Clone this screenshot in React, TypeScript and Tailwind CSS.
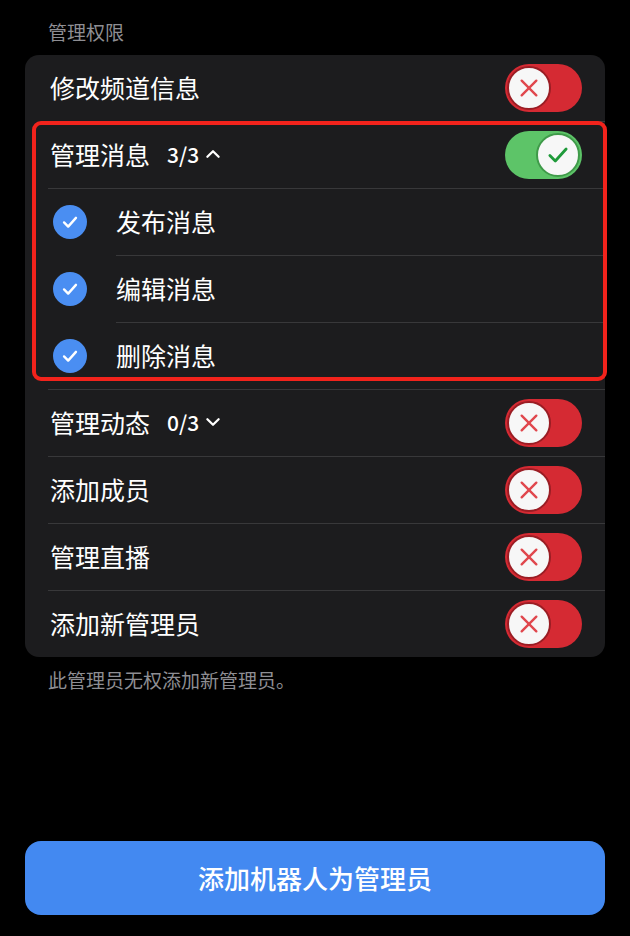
import React from "react";

const font = { fontFamily: '"Noto Sans CJK SC", "Noto Sans", sans-serif' };

const Toggle = ({ on }: { on: boolean }) => (
  <div
    className={`flex h-[48px] w-[77px] items-center rounded-full p-[2px] ${
      on ? "justify-end bg-[#5dc468]" : "justify-start bg-[#d52a33]"
    }`}
  >
    <div
      className={`flex h-[44px] w-[44px] items-center justify-center rounded-full border-2 bg-[#f7f7f7] ${
        on ? "border-[#3f9a49]" : "border-[#9a1d24]"
      }`}
    >
      {on ? (
        <svg width="26" height="26" viewBox="0 0 24 24" fill="none" stroke="#1f9a3a" strokeWidth="2.6" strokeLinecap="round" strokeLinejoin="round">
          <polyline points="4.5,12.5 9.5,17.5 19.5,6.5" />
        </svg>
      ) : (
        <svg width="22" height="22" viewBox="0 0 24 24" fill="none" stroke="#e0474d" strokeWidth="2.6" strokeLinecap="round">
          <line x1="4" y1="4" x2="20" y2="20" />
          <line x1="20" y1="4" x2="4" y2="20" />
        </svg>
      )}
    </div>
  </div>
);

const Chevron = ({ up }: { up: boolean }) => (
  <svg width="18" height="18" viewBox="0 0 16 16" fill="none" stroke="#fff" strokeWidth="2" strokeLinecap="round" strokeLinejoin="round" className="ml-[5px]">
    {up ? <polyline points="3,10.5 8,5.5 13,10.5" /> : <polyline points="3,5.5 8,10.5 13,5.5" />}
  </svg>
);

const Divider = ({ inset }: { inset: string }) => <div className={`h-px bg-[#38383a] ${inset}`} />;

const Row = ({ label, count, up, on }: { label: string; count?: string; up?: boolean; on: boolean }) => (
  <div className="flex h-[66px] items-center justify-between pl-[25px] pr-[23px]">
    <div className="flex items-center pb-[2px]">
      <span className="text-[25px] leading-[32px] text-white">{label}</span>
      {count && (
        <>
          <span className="ml-[17px] text-[21px] font-medium leading-[32px] text-white">{count}</span>
          <Chevron up={!!up} />
        </>
      )}
    </div>
    <Toggle on={on} />
  </div>
);

const SubRow = ({ label }: { label: string }) => (
  <div className="flex h-[66px] items-center">
    <div className="ml-[28px] flex h-[34px] w-[34px] items-center justify-center rounded-full bg-[#4a8ef2]">
      <svg width="22" height="22" viewBox="0 0 24 24" fill="none" stroke="#fff" strokeWidth="2.6" strokeLinecap="round" strokeLinejoin="round">
        <polyline points="5.5,12.5 10,17 18.5,7.5" />
      </svg>
    </div>
    <span className="ml-[29px] pb-[2px] text-[25px] leading-[32px] text-white">{label}</span>
  </div>
);

export default function App() {
  return (
    <div className="flex min-h-[936px] flex-col bg-black px-[25px] pb-[21px] pt-[20px]" style={font}>
      <div className="pl-[23px] text-[19px] leading-[24px] text-[#8e8e93]">管理权限</div>
      <div className="mt-[11px] rounded-[14px] bg-[#1c1c1e]">
        <Row label="修改频道信息" on={false} />
        <Divider inset="ml-[23px]" />
        <div className="relative">
          <Row label="管理消息" count="3/3" up on />
          <Divider inset="ml-[23px]" />
          <SubRow label="发布消息" />
          <Divider inset="ml-[91px]" />
          <SubRow label="编辑消息" />
          <Divider inset="ml-[91px]" />
          <SubRow label="删除消息" />
          <div className="pointer-events-none absolute bottom-[8px] left-[7px] right-[-2px] top-[-1px] rounded-[9px] border-[4px] border-[#f2231c]" />
        </div>
        <Divider inset="ml-[23px]" />
        <Row label="管理动态" count="0/3" on={false} />
        <Divider inset="ml-[23px]" />
        <Row label="添加成员" on={false} />
        <Divider inset="ml-[23px]" />
        <Row label="管理直播" on={false} />
        <Divider inset="ml-[23px]" />
        <Row label="添加新管理员" on={false} />
      </div>
      <div className="mt-[11px] pl-[23px] text-[19px] leading-[24px] text-[#8e8e93]">此管理员无权添加新管理员。</div>
      <button className="mt-auto flex h-[74px] items-center justify-center rounded-[16px] bg-[#4389f1] pb-[2px] text-[26px] font-medium text-white">
        添加机器人为管理员
      </button>
    </div>
  );
}
